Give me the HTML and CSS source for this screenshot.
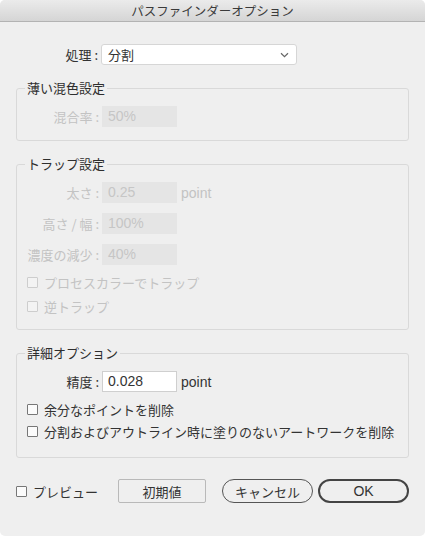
FILE: index.html
```html
<!DOCTYPE html>
<html lang="ja">
<head>
    <meta charset="UTF-8">
    <title>パスファインダーオプション</title>
    <link rel="stylesheet" href="styles.css">
</head>
<body>
    <div class="dialog">
        <div class="titlebar">パスファインダーオプション</div>

        <div class="content">
            <div class="row top-row">
                <span class="label">処理 :</span>
                <div class="select">
                    <span>分割</span>
                    <svg width="9" height="6" viewBox="0 0 9 6"><path d="M1 1.2 L4.5 4.6 L8 1.2" fill="none" stroke="#666" stroke-width="1.2"/></svg>
                </div>
            </div>

            <fieldset class="group">
                <legend>薄い混色設定</legend>
                <div class="row disabled">
                    <span class="label">混合率 :</span>
                    <div class="field off">50%</div>
                </div>
            </fieldset>

            <fieldset class="group trap">
                <legend>トラップ設定</legend>
                <div class="rows">
                    <div class="row disabled">
                        <span class="label">太さ :</span>
                        <div class="field off">0.25</div>
                        <span class="unit">point</span>
                    </div>
                    <div class="row disabled">
                        <span class="label">高さ / 幅 :</span>
                        <div class="field off">100%</div>
                    </div>
                    <div class="row disabled">
                        <span class="label">濃度の減少 :</span>
                        <div class="field off">40%</div>
                    </div>
                </div>
                <div class="checks">
                    <label class="check disabled"><span class="box"></span>プロセスカラーでトラップ</label>
                    <label class="check disabled"><span class="box"></span>逆トラップ</label>
                </div>
            </fieldset>

            <fieldset class="group detail">
                <legend>詳細オプション</legend>
                <div class="row">
                    <span class="label">精度 :</span>
                    <div class="field">0.028</div>
                    <span class="unit">point</span>
                </div>
                <div class="checks">
                    <label class="check"><span class="box"></span>余分なポイントを削除</label>
                    <label class="check"><span class="box"></span>分割およびアウトライン時に塗りのないアートワークを削除</label>
                </div>
            </fieldset>

            <div class="footer">
                <label class="check preview"><span class="box"></span>プレビュー</label>
                <button class="btn-reset">初期値</button>
                <button class="btn-cancel">キャンセル</button>
                <button class="btn-ok">OK</button>
            </div>
        </div>
    </div>
</body>
</html>
```

FILE: styles.css
```css
body {
    margin: 0;
    background: #fff;
    font-family: "Noto Sans CJK JP", "Liberation Sans", sans-serif;
    font-size: 13px;
    color: #333;
}

.dialog {
    width: 425px;
    height: 536px;
    background: #efefef;
    border-radius: 5px;
    overflow: hidden;
}

.titlebar {
    height: 21px;
    line-height: 21px;
    text-align: center;
    font-size: 12.5px;
    color: #3a3a3a;
    background: linear-gradient(#ebebeb, #d5d5d5);
    border-bottom: 1px solid #b3b3b3;
}

.content {
    padding: 22px 16px 0;
}

.row {
    display: flex;
    align-items: center;
    height: 21px;
}

.label {
    width: 82px;
    text-align: right;
    padding-right: 3px;
    white-space: nowrap;
}

.group .label {
    width: 74px;
}

.top-row {
    margin-bottom: 15px;
}

.select {
    height: 19px;
    background: #fff;
    border: 1px solid #d6d6d6;
    border-radius: 3px;
    display: flex;
    align-items: center;
    justify-content: space-between;
    padding: 0 7px 0 6px;
    width: 181px;
}

.field {
    width: 68px;
    height: 19px;
    line-height: 19px;
    padding-left: 5px;
    background: #fff;
    border: 1px solid #cfcfcf;
    font-family: "Liberation Sans", sans-serif;
    font-size: 14px;
}

.field.off {
    background: #e5e5e5;
    border-color: #e5e5e5;
    color: #c6c6c6;
}

.unit {
    margin-left: 4px;
    font-family: "Liberation Sans", sans-serif;
    font-size: 14px;
}

.group {
    margin: 0 0 15px;
    padding: 10px 8px 13px 8px;
    border: 1px solid #d9d9d9;
    border-radius: 3px;
}

.group legend {
    padding: 0 2px;
    line-height: 16px;
    font-size: 13px;
    color: #2e2e2e;
}

.trap {
    padding-bottom: 14px;
}

.detail {
    padding-bottom: 17px;
}

.rows {
    display: flex;
    flex-direction: column;
    gap: 10px;
}

.checks {
    display: flex;
    flex-direction: column;
    gap: 4px;
    margin-top: 8px;
}

.trap .checks {
    gap: 6px;
}

.check {
    display: flex;
    align-items: center;
    height: 18px;
    margin-left: 2px;
}

.box {
    width: 9px;
    height: 9px;
    border: 1px solid #777;
    border-radius: 1px;
    background: #fbfbfb;
    margin-right: 6px;
}

.disabled {
    color: #c3c3c3;
}

.disabled .box {
    border-color: #cdcdcd;
    background: #f3f3f3;
}

.footer {
    display: flex;
    align-items: center;
    margin-top: 21px;
    height: 24px;
}

.preview {
    margin-left: 0;
    width: 102px;
}

button {
    font-family: "Noto Sans CJK JP", "Liberation Sans", sans-serif;
    font-size: 13px;
    color: #333;
    background: #efefef;
    height: 24px;
    padding: 0;
    cursor: pointer;
}

.btn-reset {
    width: 88px;
    border: 1px solid #b9b9b9;
    border-radius: 2px;
    margin-right: 16px;
}

.btn-cancel {
    width: 91px;
    border: 1px solid #555;
    border-radius: 12px;
    margin-right: 5px;
}

.btn-ok {
    width: 91px;
    border: 2px solid #444;
    border-radius: 12px;
    font-family: "Liberation Sans", sans-serif;
    font-size: 14px;
}
```
